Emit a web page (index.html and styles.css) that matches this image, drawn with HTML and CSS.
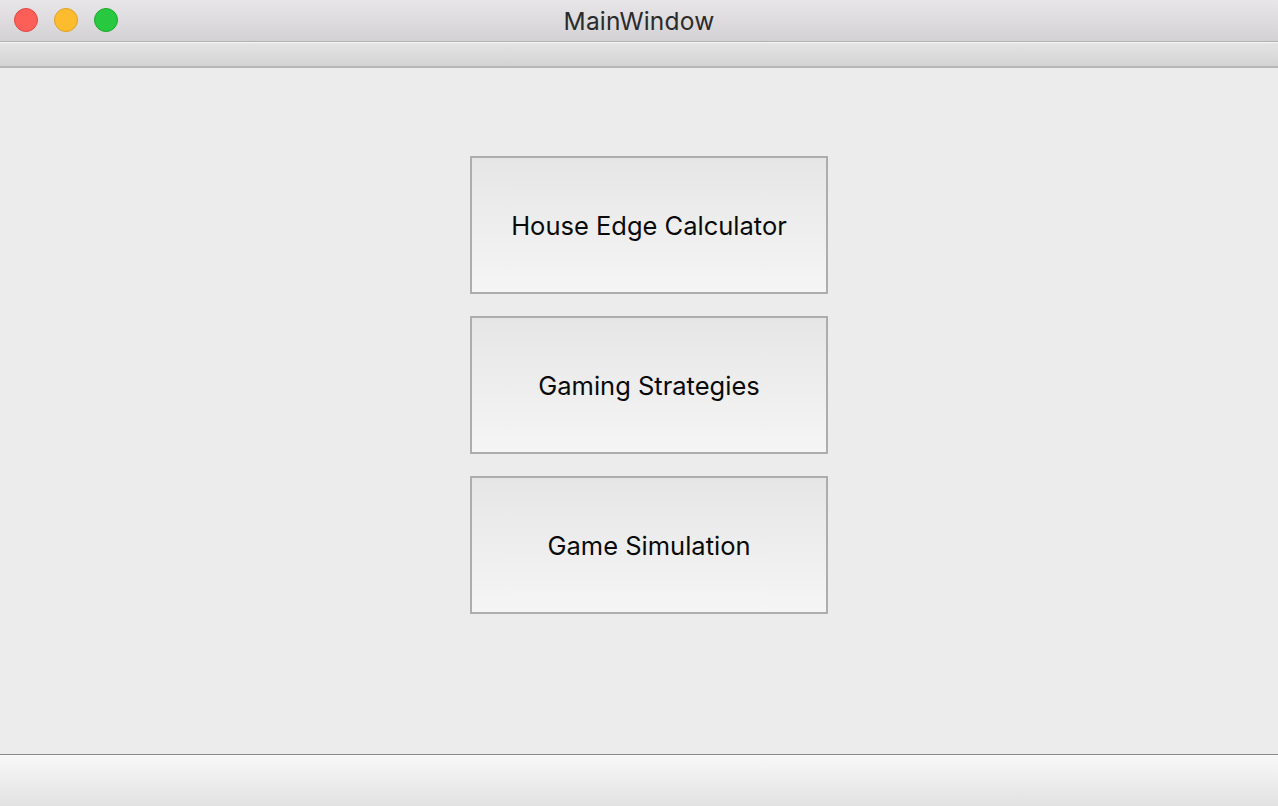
FILE: index.html
```html
<!DOCTYPE html>
<html>
<head>
<meta charset="utf-8">
<link rel="stylesheet" href="styles.css">
</head>
<body>
<div class="window">
  <div class="titlebar">
    <div class="lights">
      <span class="light red"></span>
      <span class="light yellow"></span>
      <span class="light green"></span>
    </div>
    <div class="title">MainWindow</div>
  </div>
  <div class="toolbar"></div>
  <div class="content">
    <button class="btn">House Edge Calculator</button>
    <button class="btn">Gaming Strategies</button>
    <button class="btn">Game Simulation</button>
  </div>
  <div class="statusbar"></div>
</div>
</body>
</html>
```
FILE: styles.css
```css
html, body {
  margin: 0;
  padding: 0;
  width: 1278px;
  height: 806px;
  overflow: hidden;
  font-family: Inter, "Liberation Sans", sans-serif;
}
.window {
  display: flex;
  flex-direction: column;
  width: 1278px;
  height: 806px;
  background: #ececec;
}
.titlebar {
  position: relative;
  height: 41px;
  flex: none;
  background: linear-gradient(#e8e6e8, #d3d1d3);
  border-bottom: 1px solid #b1b0b1;
  display: flex;
  align-items: center;
  justify-content: center;
}
.lights {
  position: absolute;
  left: 14px;
  top: 8px;
  display: flex;
  gap: 16px;
}
.light {
  width: 24px;
  height: 24px;
  border-radius: 50%;
  box-sizing: border-box;
}
.red { background: #fc5f57; border: 1px solid #df4744; }
.yellow { background: #fdbc2e; border: 1px solid #dea123; }
.green { background: #28c840; border: 1px solid #1aab29; }
.title {
  font-size: 24.5px;
  color: #2b2b2b;
  letter-spacing: 0.2px;
  padding-top: 1px;
}
.toolbar {
  height: 23px;
  flex: none;
  border-top: 1px solid #f6f6f6;
  background: linear-gradient(#e4e4e4, #d3d3d3);
  border-bottom: 2px solid #b6b6b6;
}
.content {
  flex: 1;
  display: flex;
  flex-direction: column;
  align-items: center;
  padding-top: 88px;
  padding-left: 20px;
  gap: 22px;
}
.btn {
  width: 358px;
  height: 138px;
  box-sizing: border-box;
  border: 2px solid #adadad;
  background: linear-gradient(#e6e6e6, #f5f5f5);
  font-family: Inter, "Liberation Sans", sans-serif;
  font-size: 25.5px;
  color: #0a0a0a;
  padding: 0;
  margin: 0;
  line-height: 1;
  padding-top: 2px;
}
.statusbar {
  height: 51px;
  flex: none;
  border-top: 1px solid #8a8a8a;
  background: linear-gradient(#f8f8f8, #e2e2e2);
}
```
